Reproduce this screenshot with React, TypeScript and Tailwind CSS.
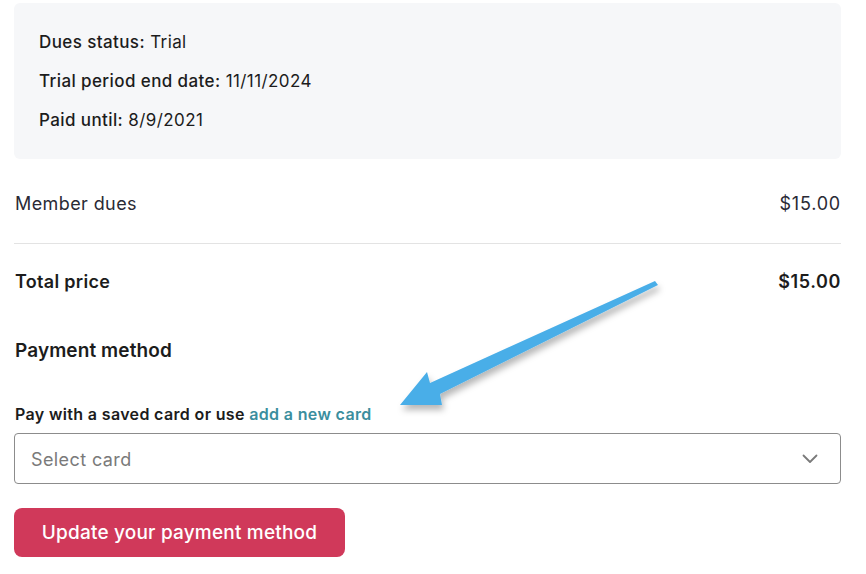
import React from "react";

export default function App() {
  return (
    <div
      className="relative w-[866px] h-[574px] bg-white overflow-hidden text-[#1c1c1c]"
      style={{ fontFamily: "Inter, 'Liberation Sans', sans-serif" }}
    >
      <div className="ml-[14px] w-[827px] pt-[3px]">
        <div className="bg-[#f6f7f9] rounded-[6px] h-[156px] pt-[20px] pl-[25px]">
          <div className="flex flex-col text-[17px] leading-[39px] tracking-[0.4px]">
            <div>
              <span className="font-medium">Dues status:</span> Trial
            </div>
            <div>
              <span className="font-medium">Trial period end date:</span> 11/11/2024
            </div>
            <div>
              <span className="font-medium">Paid until:</span> 8/9/2021
            </div>
          </div>
        </div>

        <div className="mt-[5px] h-[80px] flex items-center justify-between border-b border-[#e3e3e3] text-[18px] tracking-[0.4px] text-[#2a2a35]">
          <span className="pl-[1px]">Member dues</span>
          <span className="tracking-[0.8px]">$15.00</span>
        </div>

        <div className="h-[74px] flex items-center justify-between text-[18px] tracking-[0.3px] font-semibold">
          <span className="pl-[1px]">Total price</span>
          <span className="tracking-[0.6px]">$15.00</span>
        </div>

        <div className="mt-[21px] text-[19px] leading-[24px] tracking-[0.1px] font-semibold pl-[1px]">
          Payment method
        </div>

        <div className="mt-[41px] text-[16px] leading-[20px] tracking-[0.35px] font-semibold pl-[1px]">
          Pay with a saved card or use{" "}
          <span className="text-[#3b8e9e]">add a new card</span>
        </div>

        <div className="mt-[9px] h-[51px] border border-[#8c8c8c] rounded-[4px] flex items-center justify-between pl-[16px] pr-[22px]">
          <span className="text-[18px] tracking-[0.4px] text-[#7a7a7a] pt-[1px]">Select card</span>
          <svg width="16" height="10" viewBox="0 0 16 10" fill="none">
            <path d="M1.5 1.5 L8 8 L14.5 1.5" stroke="#7a7a7a" strokeWidth="1.8" strokeLinecap="round" strokeLinejoin="round" />
          </svg>
        </div>

        <button className="mt-[24px] h-[49px] w-[331px] bg-[#d0395a] rounded-[8px] text-white text-[19px] tracking-[0.2px] font-medium flex items-center justify-center pt-[1px]">
          Update your payment method
        </button>
      </div>

      <svg
        className="absolute left-0 top-0 pointer-events-none"
        width="866"
        height="574"
        viewBox="0 0 866 574"
      >
        <defs>
          <filter id="sh" x="-20%" y="-20%" width="140%" height="160%">
            <feDropShadow dx="2" dy="5" stdDeviation="3" floodColor="#000" floodOpacity="0.28" />
          </filter>
        </defs>
        <polygon
          points="400,405 427,372 430,383 655,281 658,285 440,394 442,405"
          fill="#4aaee8"
          filter="url(#sh)"
        />
      </svg>
    </div>
  );
}
